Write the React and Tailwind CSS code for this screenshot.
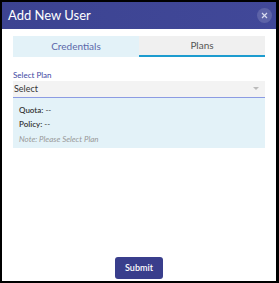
export default function App() {
  return (
    <div className="w-[279px] h-[283px] bg-black pt-[2px] pl-[2px] pr-[3px] pb-[2px]" style={{ fontFamily: "Lato, 'Open Sans', sans-serif" }}>
      <div className="flex h-full flex-col bg-white">
        <div className="flex h-[27px] items-center justify-between bg-gradient-to-r from-[#3c4391] to-[#414899] pl-[6px] pr-[4px]">
          <span className="text-[13px] text-white leading-none">Add New User</span>
          <span className="flex h-[15px] w-[15px] items-center justify-center rounded-full bg-white/15 text-[#d8dbef]">
            <svg width="7" height="7" viewBox="0 0 7 7"><path d="M1 1L6 6M6 1L1 6" stroke="currentColor" strokeWidth="1.2" /></svg>
          </span>
        </div>
        <div className="flex flex-1 flex-col px-[11px]">
          <div className="mt-[7px] flex h-[21px] text-[10px]">
            <div className="flex flex-1 items-center justify-center bg-[#e3f2f8] text-[#5a68aa]">Credentials</div>
            <div className="flex flex-1 items-center justify-center border-b-2 border-[#1d9ccf] bg-[#f0f0f0] text-[#555]">Plans</div>
          </div>
          <div className="mt-[13px] text-[8px] leading-[10px] text-[#3d48a3]">Select Plan</div>
          <div className="mt-[1px] flex h-[17px] items-center justify-between border-b border-[#8c9be3] bg-[#f3f3f3] pl-[1px] pr-[6px]">
            <span className="text-[9px] text-[#333]">Select</span>
            <svg width="6" height="4" viewBox="0 0 6 4"><path d="M0 0H6L3 3Z" fill="#bbb" /></svg>
          </div>
          <div className="flex h-[50px] flex-col bg-[#e3f2f8] pl-[6px] pt-[7px] text-[8px] leading-[10px]">
            <div className="text-[#333]"><span className="font-semibold">Quota:</span> --</div>
            <div className="mt-[4px] text-[#333]"><span className="font-semibold">Policy:</span> --</div>
            <div className="mt-[5px] italic text-[#999]">Note: Please Select Plan</div>
          </div>
          <div className="flex-1" />
          <div className="mb-[2px] flex justify-center">
            <button className="h-[22px] w-[48px] rounded-[3px] bg-[#393e8c] text-[9px] font-semibold text-white">Submit</button>
          </div>
        </div>
      </div>
    </div>
  );
}
